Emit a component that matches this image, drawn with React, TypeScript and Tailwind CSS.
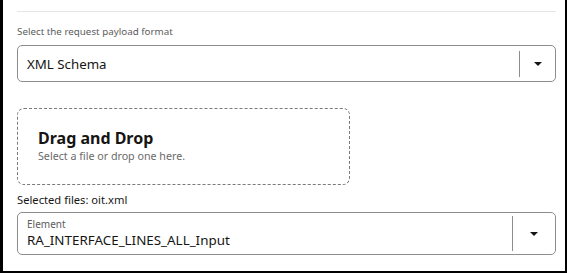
function Caret() {
  return (
    <svg width="10" height="6" viewBox="0 0 10 6" className="block">
      <path d="M1 1h8L5 5z" fill="#161513" />
    </svg>
  );
}

export default function App() {
  return (
    <div className="w-[567px] h-[273px] bg-white border-l-[3px] border-r-2 border-b-2 border-black pl-[14px] pr-[9px] font-['Noto_Sans',sans-serif] text-[#161513] overflow-hidden">
      {/* top separator */}
      <div className="pt-[11px]">
        <div className="h-px bg-[#e5e5e5]" />
      </div>

      {/* payload format */}
      <div className="mt-[13px] text-[9.8px] leading-[14px] text-[#5c5c5c]">
        Select the request payload format
      </div>
      <div className="mt-[6px] h-[37px] flex items-center border border-[#8d8d8d] rounded-[5px]">
        <span className="flex-1 pl-[9px] text-[13.3px] leading-[18px]">XML Schema</span>
        <div className="w-px h-[26px] bg-[#8d8d8d]" />
        <div className="w-[35px] flex justify-center">
          <Caret />
        </div>
      </div>

      {/* drop zone */}
      <div className="mt-[26px] w-[333px] h-[77px] border border-dashed border-[#7a7a7a] rounded-[7px] pl-[20px] pt-[18px]">
        <div className="text-[16px] leading-[22px] font-bold">Drag and Drop</div>
        <div className="text-[10.7px] leading-[14px] text-[#6a6a6a]">Select a file or drop one here.</div>
      </div>

      <div className="mt-[7px] text-[11.2px] leading-[16px]">Selected files: oit.xml</div>

      {/* element select */}
      <div className="mt-[4px] h-[43px] flex items-center border border-[#8d8d8d] rounded-[5px]">
        <div className="flex-1 pl-[9px]">
          <div className="text-[10px] leading-[13px] text-[#5c5c5c]">Element</div>
          <div className="text-[13.4px] leading-[18px]">RA_INTERFACE_LINES_ALL_Input</div>
        </div>
        <div className="w-px h-[35px] bg-[#8d8d8d]" />
        <div className="w-[42px] flex justify-center">
          <Caret />
        </div>
      </div>
    </div>
  );
}
